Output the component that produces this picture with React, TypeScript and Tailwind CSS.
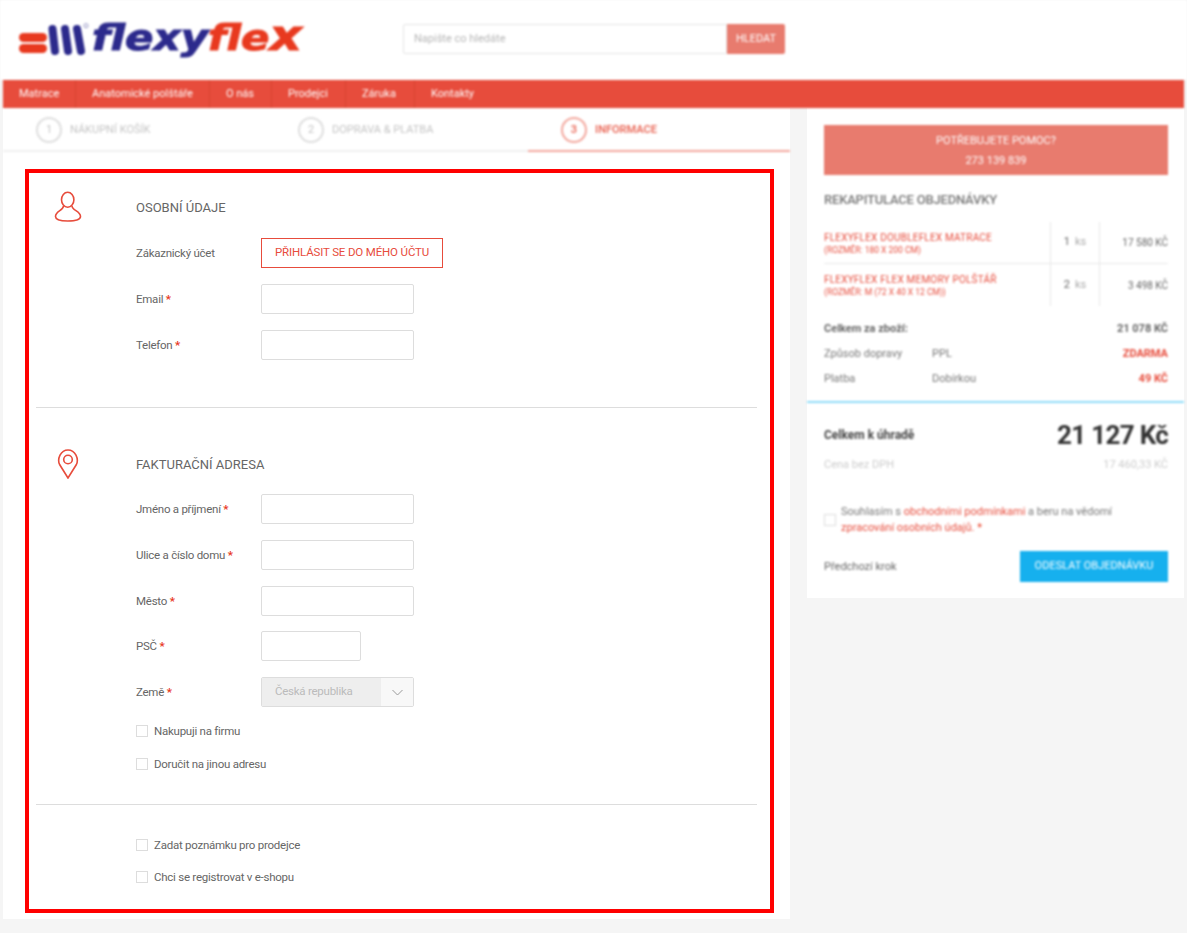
const font = { fontFamily: 'Roboto, "Liberation Sans", sans-serif' };

const navItems = [
  { label: 'Matrace', width: 'w-[73px]' },
  { label: 'Anatomické polštáře', width: 'w-[134px]' },
  { label: 'O nás', width: 'w-[62px]' },
  { label: 'Prodejci', width: 'w-[74px]' },
  { label: 'Záruka', width: 'w-[69px]' },
  { label: 'Kontakty', width: 'w-[90px]' },
];

function Logo() {
  return (
    <div className="flex items-center">
      <svg width="74" height="36" viewBox="0 0 74 36" className="shrink-0">
        <rect x="1" y="12" width="28" height="9" rx="4.5" fill="#e8391f" />
        <rect x="1" y="23" width="28" height="9" rx="4.5" fill="#e8391f" />
        <path d="M34.5 8 L37 30 M47 8 L50 30 M59 8 L63 30" stroke="#2c2a8c" strokeWidth="8" strokeLinecap="round" fill="none" />
        <circle cx="68" cy="4.7" r="2" fill="none" stroke="#8f8fc0" strokeWidth="1" />
      </svg>
      <div
        className="text-[35px] leading-none font-bold italic whitespace-nowrap origin-left scale-x-[1.2] -translate-y-[3px] [-webkit-text-stroke:1px_currentColor]"
        style={{ fontFamily: '"DejaVu Sans", sans-serif' }}
      >
        <span className="text-[#2c2a8c]">flexy</span>
        <span className="text-[#e8391f]">
          fle<span className="text-[42px]">x</span>
        </span>
      </div>
    </div>
  );
}

function Header() {
  return (
    <header className="h-20 bg-white flex items-start blur-[1px]">
      <div className="ml-[18px] mt-[18px] w-[385px] h-[36px]">
        <Logo />
      </div>
      <div className="mt-6 flex h-[30px] w-[382px]">
        <div className="flex-1 flex items-center border border-[#e5e5e5] rounded-l-[2px] bg-white px-[10px] pt-px text-[11px] text-[#b5b5b5]">
          Napište co hledáte
        </div>
        <div className="w-[58px] flex items-center justify-center bg-[#e87b6e] text-white text-[11px] rounded-r-[2px]">
          HLEDAT
        </div>
      </div>
    </header>
  );
}

function Nav() {
  return (
    <nav className="mx-[3px] h-[28px] bg-[#e74c3c] flex blur-[0.8px]">
      {navItems.map((item, i) => (
        <div
          key={item.label}
          className={`${item.width} flex items-center px-4 text-[11px] text-white whitespace-nowrap ${i < navItems.length - 1 ? 'border-r border-[#d8432f]' : ''}`}
        >
          {item.label}
        </div>
      ))}
    </nav>
  );
}

function Steps() {
  const steps = [
    { n: 1, label: 'NÁKUPNÍ KOŠÍK', active: false },
    { n: 2, label: 'DOPRAVA & PLATBA', active: false },
    { n: 3, label: 'INFORMACE', active: true },
  ];
  return (
    <div className="flex h-[44px] border-b-2 border-[#f0f0f0] blur-[0.8px]">
      {steps.map((s) => (
        <div
          key={s.n}
          className={`w-[262px] h-[44px] flex items-start pl-[33px] pt-[9px] gap-[8px] text-[11px] ${
            s.active ? 'ml-px border-b-2 border-[#f3a79d] text-[#ea6a5a] font-semibold' : 'text-[#c4c4c4]'
          }`}
        >
          <span
            className={`w-[26px] h-[26px] rounded-full border-2 flex items-center justify-center ${
              s.active ? 'border-[#f3a79d]' : 'border-[#dedede]'
            }`}
          >
            {s.n}
          </span>
          <span className="h-[26px] flex items-center">{s.label}</span>
        </div>
      ))}
    </div>
  );
}

function Req() {
  return <span className="text-[#e8391f] font-bold"> *</span>;
}

function Row({ label, req, children }: { label: string; req?: boolean; children: React.ReactNode }) {
  return (
    <div className="flex items-center h-[30px]">
      <div className="w-[125px] pt-px text-[11.5px] tracking-[-0.25px] text-[#666]">
        {label}
        {req && <Req />}
      </div>
      {children}
    </div>
  );
}

function Field({ small }: { small?: boolean }) {
  return <input className={`h-[30px] ${small ? 'w-[100px]' : 'w-[153px]'} bg-white border border-[#ddd] rounded-[2px]`} />;
}

function Check({ label }: { label: string }) {
  return (
    <label className="flex items-center gap-[6px] text-[11.5px] tracking-[-0.25px] text-[#666] h-4">
      <span className="w-3 h-3 border border-[#ddd] bg-white shrink-0" />
      <span className="pt-[2px]">{label}</span>
    </label>
  );
}

function UserIcon() {
  return (
    <svg width="28" height="32" viewBox="0 0 28 32" fill="none" stroke="#e74c3c" strokeWidth="1.6">
      <ellipse cx="13.7" cy="8.7" rx="6.2" ry="7.5" />
      <path d="M9.5 15 C9.5 19.5 1.5 20 1.5 25.5 C1.5 29 6 30 13.7 30 C21 30 26.5 29 26.5 25.5 C26.5 20 18 19.5 18 15" />
    </svg>
  );
}

function PinIcon() {
  return (
    <svg width="22" height="30" viewBox="0 0 22 30" fill="none" stroke="#e74c3c" strokeWidth="1.6">
      <path d="M11 29 L2.6 15.5 C0 10 3.5 1 11 1 C18.5 1 22 10 19.4 15.5 Z" />
      <circle cx="11" cy="10.5" r="4.3" />
    </svg>
  );
}

function FormPanel() {
  return (
    <div className="border-4 border-[#ff0000] h-[744px] pl-[7px] pr-[13px] bg-white">
      <section className="relative h-[235px] border-b border-[#ddd]">
        <div className="absolute left-[18px] top-[18px]">
          <UserIcon />
        </div>
        <div className="pl-[100px] pt-[26px]">
          <h2 className="text-[13px] leading-[18px] text-[#666] mb-[21px]">OSOBNÍ ÚDAJE</h2>
          <div className="flex flex-col gap-4">
            <Row label="Zákaznický účet">
              <button className="h-[30px] w-[182px] border border-[#e74c3c] text-[11.5px] tracking-[-0.15px] text-[#e74c3c]">
                PŘIHLÁSIT SE DO MÉHO ÚČTU
              </button>
            </Row>
            <Row label="Email" req>
              <Field />
            </Row>
            <Row label="Telefon" req>
              <Field />
            </Row>
          </div>
        </div>
      </section>
      <section className="relative h-[397px] border-b border-[#ddd]">
        <div className="absolute left-[21px] top-[41px]">
          <PinIcon />
        </div>
        <div className="pl-[100px] pt-[48px]">
          <h2 className="text-[13px] leading-[18px] text-[#666] mb-[20px]">FAKTURAČNÍ ADRESA</h2>
          <div className="flex flex-col gap-4">
            <Row label="Jméno a příjmení" req>
              <Field />
            </Row>
            <Row label="Ulice a číslo domu" req>
              <Field />
            </Row>
            <Row label="Město" req>
              <Field />
            </Row>
          </div>
          <div className="mt-[15px]">
            <Row label="PSČ" req>
              <Field small />
            </Row>
          </div>
          <div className="mt-4">
            <Row label="Země" req>
              <div className="flex h-[30px] w-[153px] border border-[#ddd] rounded-[2px] overflow-hidden">
                <div className="w-[119px] bg-[#eee] flex items-center pl-[13px] text-[11.5px] tracking-[-0.25px] text-[#bbb]">Česká republika</div>
                <div className="flex-1 bg-[#f8f8f8] flex items-center justify-center">
                  <svg width="11" height="7" viewBox="0 0 11 7" fill="none" stroke="#999" strokeWidth="1">
                    <path d="M0.5 1 L5.5 6 L10.5 1" />
                  </svg>
                </div>
              </div>
            </Row>
          </div>
          <div className="mt-4 flex flex-col gap-[17px]">
            <Check label="Nakupuji na firmu" />
            <Check label="Doručit na jinou adresu" />
          </div>
        </div>
      </section>
      <section className="pl-[100px] pt-[32px] flex flex-col gap-4">
        <Check label="Zadat poznámku pro prodejce" />
        <Check label="Chci se registrovat v e-shopu" />
      </section>
    </div>
  );
}

function Summary() {
  const items = [
    { name: 'FLEXYFLEX DOUBLEFLEX MATRACE', size: '(ROZMĚR: 180 X 200 CM)', qty: '1', price: '17 580 KČ' },
    { name: 'FLEXYFLEX FLEX MEMORY POLŠTÁŘ', size: '(ROZMĚR: M (72 X 40 X 12 CM))', qty: '2', price: '3 498 KČ' },
  ];
  return (
    <aside className="w-[377px] h-[490px] bg-white">
      <div className="blur-[1px]">
        <div className="pl-[17px] pr-4 pt-[17px]">
          <div className="h-[50px] bg-[#e87b6e] flex flex-col items-center justify-center gap-[5px] text-[11px] leading-[15px] text-white">
            <div>POTŘEBUJETE POMOC?</div>
            <div>273 139 839</div>
          </div>
          <h3 className="mt-4 text-[13px] tracking-[-0.2px] leading-[18px] text-[#777] font-medium">REKAPITULACE OBJEDNÁVKY</h3>
          <div className="mt-[13px]">
            {items.map((item, i) => (
              <div key={item.name} className={`flex h-[42px] ${i === 0 ? 'border-b border-[#e8e8e8]' : ''}`}>
                <div className="w-[227px] pt-px flex flex-col justify-center border-r border-[#e8e8e8]">
                  <div className="text-[10px] tracking-[0.2px] leading-[14px] text-[#e74c3c] whitespace-nowrap">{item.name}</div>
                  <div className="text-[8.5px] leading-[11px] text-[#e74c3c] whitespace-nowrap">{item.size}</div>
                </div>
                <div className="w-[49px] flex items-center justify-center gap-[5px] border-r border-[#e8e8e8] text-[11px] text-[#aaa]">
                  <span className="text-[#666]">{item.qty}</span> ks
                </div>
                <div className="flex-1 flex items-center justify-end text-[10px] text-[#666]">{item.price}</div>
              </div>
            ))}
          </div>
          <div className="mt-[15px] flex flex-col gap-[10px] text-[11px] leading-[15px] text-[#777]">
            <div className="flex justify-between font-bold text-[#666]">
              <span>Celkem za zboží:</span>
              <span>21 078 KČ</span>
            </div>
            <div className="flex">
              <span className="w-[108px]">Způsob dopravy</span>
              <span>PPL</span>
              <span className="ml-auto font-bold text-[#e74c3c]">ZDARMA</span>
            </div>
            <div className="flex">
              <span className="w-[108px]">Platba</span>
              <span>Dobírkou</span>
              <span className="ml-auto font-bold text-[#e74c3c]">49 KČ</span>
            </div>
          </div>
        </div>
        <div className="mt-[15px] border-t-2 border-[#8fdcf8] pl-[17px] pr-4 pt-[17px]">
          <div className="flex items-center justify-between h-[30px]">
            <span className="text-xs font-bold text-[#444]">Celkem k úhradě</span>
            <span className="text-[26px] leading-[30px] font-bold text-[#333] tracking-[-0.7px]">21 127 Kč</span>
          </div>
          <div className="mt-[7px] flex justify-between text-[11px] leading-[15px] text-[#ccc]">
            <span>Cena bez DPH</span>
            <span>17 460,33 KČ</span>
          </div>
          <div className="mt-[32px] flex items-center gap-[5px]">
            <span className="w-3 h-3 border border-[#ddd] shrink-0" />
            <p className="text-[11px] leading-4 text-[#777]">
              Souhlasím s <span className="text-[#e74c3c]">obchodními podmínkami</span> a beru na vědomí
              <br />
              <span className="text-[#e74c3c]">zpracování osobních údajů.</span>
              <span className="text-[#e8391f]"> *</span>
            </p>
          </div>
          <div className="mt-[15px] flex items-center justify-between">
            <span className="text-[11px] pt-[2px] text-[#666]">Předchozí krok</span>
            <div className="w-[148px] h-[31px] bg-[#16b0ee] flex items-center justify-center text-[11px] text-white">
              ODESLAT OBJEDNÁVKU
            </div>
          </div>
        </div>
      </div>
    </aside>
  );
}

export default function App() {
  return (
    <div className="min-h-[933px] bg-[#f5f5f5]" style={font}>
      <Header />
      <Nav />
      <main className="flex items-start pl-[3px] gap-[17px]">
        <div className="w-[787px] bg-white">
          <Steps />
          <div className="pt-[17px] pl-[22px] pr-4 pb-[6px]">
            <FormPanel />
          </div>
        </div>
        <Summary />
      </main>
    </div>
  );
}
